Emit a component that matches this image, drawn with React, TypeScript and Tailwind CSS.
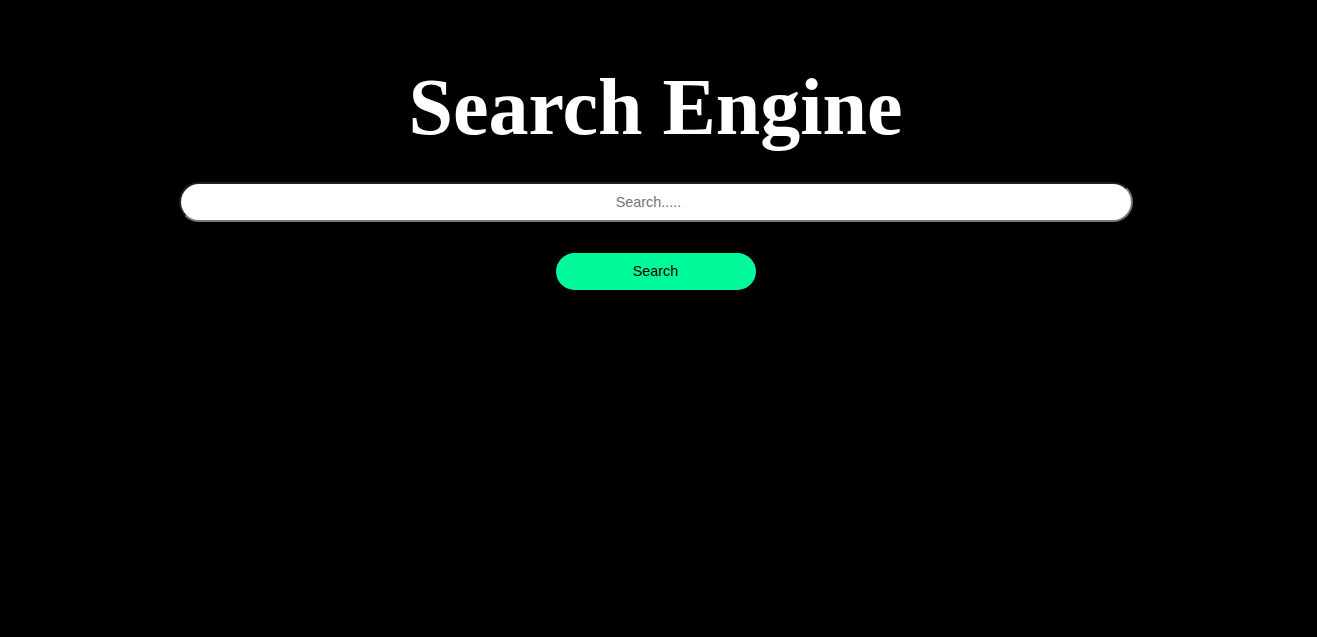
const App = () => {
  return (
    <div className="min-h-screen w-full bg-black">
      <div className="flex w-[1311px] flex-col items-center">
        <h1 className="mt-[63px] text-[80px] font-bold leading-[88px] text-white [font-family:'Liberation_Serif','Times_New_Roman',serif]">
          Search Engine
        </h1>

        <input
          type="text"
          placeholder="Search....."
          className="mt-[31px] h-[40px] w-[954px] rounded-[20px] border-2 border-[#767676] bg-white pl-[1px] pr-[15px] text-center text-[14.4px] text-black outline-none [border-style:inset] placeholder:text-[#757575] [font-family:'Liberation_Sans',Arial,sans-serif]"
        />

        <button className="mt-[31px] h-[37px] w-[200px] rounded-[20px] bg-[#00fa9a] text-[14.4px] text-black [font-family:'Liberation_Sans',Arial,sans-serif]">
          Search
        </button>
      </div>
    </div>
  );
};

export default App;
